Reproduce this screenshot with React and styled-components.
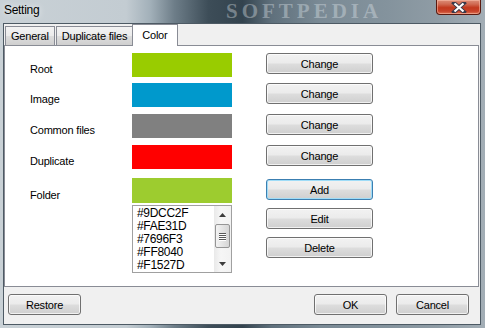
import React from 'react';
import styled, { createGlobalStyle, css } from 'styled-components';

const GlobalStyle = createGlobalStyle`
  html, body {
    margin: 0;
    padding: 0;
    width: 485px;
    height: 328px;
    overflow: hidden;
  }
  body {
    font-family: "Liberation Sans", Arial, sans-serif;
    font-size: 11px;
    letter-spacing: -0.2px;
    color: #000;
  }
`;

const Window = styled.div`
  width: 485px;
  height: 328px;
  display: flex;
  flex-direction: column;
  background: linear-gradient(
    90deg,
    #c9d1d6 0%,
    #c3ccd2 26%,
    #a2b0b9 31%,
    #6d7d88 36%,
    #3d4d58 43%,
    #33434e 50%,
    #5f707c 56%,
    #7a8a95 66%,
    #84939d 80%,
    #8f9ca5 90%,
    #a3aeb6 100%
  );
  position: relative;
`;

const TitleBar = styled.div`
  height: 23px;
  flex: none;
  display: flex;
  align-items: flex-start;
  position: relative;
`;

const Title = styled.div`
  padding: 3px 0 0 4px;
  font-size: 12px;
  line-height: 15px;
  letter-spacing: -0.3px;
  color: #000;
  text-shadow: 0 0 6px rgba(255, 255, 255, 0.9);
`;

const Watermark = styled.div`
  position: absolute;
  pointer-events: none;
  font-family: "Liberation Serif", "Times New Roman", serif;
  font-weight: bold;
  white-space: nowrap;
  color: rgba(225, 232, 237, 0.38);
  font-size: 21px;
  line-height: 21px;
  letter-spacing: 4px;
  left: 226px;
  top: 1px;
`;

const CloseButton = styled.div`
  position: absolute;
  top: 0;
  left: 436px;
  width: 45px;
  height: 15px;
  border: 1px solid #5a1a10;
  border-top: none;
  border-radius: 0 0 4px 4px;
  background: linear-gradient(#dc8e78 0%, #d06a52 30%, #c2391e 55%, #c8432a 80%, #dd7556 100%);
  box-shadow: inset 0 0 0 1px rgba(255, 200, 180, 0.5);
  display: flex;
  align-items: center;
  justify-content: center;
  box-sizing: border-box;
`;

const Client = styled.div`
  flex: 1;
  margin: 0 4px 3px 3px;
  background: #f0f0f0;
  border: 1px solid #4d5a64;
  display: flex;
  flex-direction: column;
  position: relative;
`;

const TabStrip = styled.div`
  height: 21px;
  display: flex;
  align-items: flex-end;
  padding-left: 1px;
  position: relative;
  z-index: 1;
`;

const Tab = styled.div`
  box-sizing: border-box;
  height: 19px;
  padding: 0 5px;
  margin-right: 1px;
  border: 1px solid #898c95;
  border-bottom: none;
  background: linear-gradient(#f3f3f3 0%, #ebebeb 50%, #dddddd 51%, #cfcfcf 100%);
  line-height: 18px;
  white-space: nowrap;

  ${p =>
    p.active &&
    css`
      height: 22px;
      margin: 0 0 -1px -2px;
      padding: 0 9px;
      background: #fff;
      line-height: 20px;
    `}
`;

const Panel = styled.div`
  height: 242px;
  box-sizing: border-box;
  margin-right: 1px;
  background: #fff;
  border: 1px solid #898c95;
  padding: 7px 0 0 25px;
`;

const ColorGrid = styled.div`
  display: grid;
  grid-template-columns: 68px 100px 107px;
  grid-template-rows: 30px 31px 31px 33px auto;
  column-gap: 34px;
`;

const Label = styled.div`
  padding-top: ${p => p.offset || 9}px;
  line-height: 15px;
  white-space: nowrap;
`;

const Swatch = styled.div`
  height: ${p => p.h || 24}px;
  background: ${p => p.color};
`;

const Stack = styled.div`
  display: flex;
  flex-direction: column;
  gap: ${p => p.gap}px;
  padding-top: ${p => p.top || 0}px;
`;

const Button = styled.button`
  box-sizing: border-box;
  height: 21px;
  width: ${p => p.w || 107}px;
  padding: 0;
  font-family: inherit;
  font-size: 11px;
  letter-spacing: -0.2px;
  color: #000;
  border: 1px solid #707070;
  border-radius: 3px;
  background: linear-gradient(#f2f2f2 0%, #ebebeb 48%, #dddddd 52%, #cfcfcf 100%);
  box-shadow: inset 0 0 0 1px rgba(255, 255, 255, 0.7);
  line-height: 18px;
  cursor: default;

  ${p =>
    p.focused &&
    css`
      border-color: #3c7fb1;
      box-shadow: inset 0 0 0 1px #9fdcf7;
    `}
`;

const ListBox = styled.div`
  box-sizing: border-box;
  height: 68px;
  border: 1px solid #a0a0a0;
  display: flex;
  background: #fff;
`;

const ListItems = styled.div`
  flex: 1;
  padding: 1px 0 0 4px;
  line-height: 13px;
  font-size: 12px;
  letter-spacing: -0.3px;
  overflow: hidden;
`;

const ScrollBar = styled.div`
  width: 17px;
  display: flex;
  flex-direction: column;
  align-items: center;
  background: linear-gradient(90deg, #e9e9e9, #f6f6f6 40%, #f2f2f2);
`;

const Arrow = styled.div`
  height: 17px;
  width: 17px;
  display: flex;
  align-items: center;
  justify-content: center;
`;

const Thumb = styled.div`
  box-sizing: border-box;
  width: 15px;
  height: 24px;
  margin-top: 1px;
  border: 1px solid #959595;
  border-radius: 2px;
  background: linear-gradient(90deg, #f3f3f3, #e4e4e4 50%, #d6d6d6);
  display: flex;
  flex-direction: column;
  align-items: center;
  justify-content: center;
  gap: 1px;
`;

const Grip = styled.div`
  width: 7px;
  height: 1px;
  background: #5a5a5a;
  box-shadow: 0 1px 0 #fff;
`;

const Footer = styled.div`
  flex: 1;
  display: flex;
  align-items: flex-start;
  padding: 7px 11px 0 4px;
  gap: 9px;
`;

const Spacer = styled.div`
  flex: 1;
`;

const rows = [
  { name: 'Root', color: '#99cc00' },
  { name: 'Image', color: '#0099cc' },
  { name: 'Common files', color: '#808080' },
  { name: 'Duplicate', color: '#ff0000' },
];

const saved = ['#9DCC2F', '#FAE31D', '#7696F3', '#FF8040', '#F1527D'];

function Triangle({ up }) {
  return (
    <svg width="7" height="4" viewBox="0 0 7 4">
      <polygon points={up ? '3.5,0 7,4 0,4' : '0,0 7,0 3.5,4'} fill="#3c3c3c" />
    </svg>
  );
}

export default function App() {
  return (
    <Window>
      <GlobalStyle />
      <TitleBar>
        <Watermark>SOFTPEDIA</Watermark>
        <Title>Setting</Title>
        <CloseButton>
          <svg width="16" height="11" viewBox="0 0 16 11">
            <path d="M3 1 L13 10 M13 1 L3 10" stroke="#3a3a4a" strokeWidth="4" strokeLinecap="square" />
            <path d="M3.5 1.5 L12.5 9.5 M12.5 1.5 L3.5 9.5" stroke="#fff" strokeWidth="2.2" />
          </svg>
        </CloseButton>
      </TitleBar>
      <Client>
        <TabStrip>
          <Tab>General</Tab>
          <Tab>Duplicate files</Tab>
          <Tab active>Color</Tab>
        </TabStrip>
        <Panel>
          <ColorGrid>
            {rows.map(r => (
              <React.Fragment key={r.name}>
                <Label>{r.name}</Label>
                <Swatch color={r.color} />
                <div>
                  <Button>Change</Button>
                </div>
              </React.Fragment>
            ))}
            <Label offset={10}>Folder</Label>
            <Stack gap={2}>
              <Swatch color="#9dcc2f" h={25} />
              <ListBox>
                <ListItems>
                  {saved.map(c => (
                    <div key={c}>{c}</div>
                  ))}
                </ListItems>
                <ScrollBar>
                  <Arrow>
                    <Triangle up />
                  </Arrow>
                  <Thumb>
                    <Grip />
                    <Grip />
                    <Grip />
                    <Grip />
                  </Thumb>
                  <Spacer />
                  <Arrow>
                    <Triangle />
                  </Arrow>
                </ScrollBar>
              </ListBox>
            </Stack>
            <Stack gap={8} top={1}>
              <Button focused>Add</Button>
              <Button>Edit</Button>
              <Button>Delete</Button>
            </Stack>
          </ColorGrid>
        </Panel>
        <Footer>
          <Button w={73}>Restore</Button>
          <Spacer />
          <Button w={73}>OK</Button>
          <Button w={73}>Cancel</Button>
        </Footer>
      </Client>
    </Window>
  );
}
